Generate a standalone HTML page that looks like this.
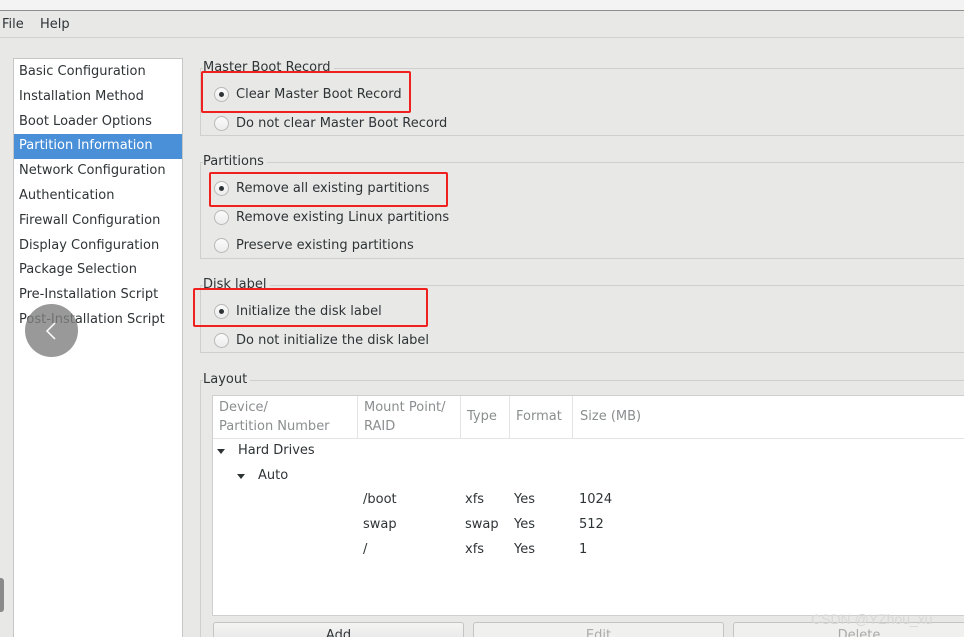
<!DOCTYPE html>
<html style="width:964px;height:637px;overflow:hidden"><head><meta charset="utf-8"><style>
*{margin:0;padding:0;box-sizing:border-box}
body{width:964px;height:637px;overflow:hidden;background:#e8e8e7;font-family:"DejaVu Sans","Liberation Sans",sans-serif;font-size:13px;color:#2e3436;position:relative}
.a{position:absolute;white-space:nowrap}
.frame{position:absolute;border:1px solid #cfcfcd;border-right:none;left:200px;width:764px}
.lbl{position:absolute;background:#e8e8e7;padding-right:3px;color:#2e3436}
.radio{position:absolute;width:15px;height:15px;border:1px solid #b8b8b6;border-radius:50%;background:linear-gradient(#fbfbfb,#ececec)}
.radio.on::after{content:"";position:absolute;left:4px;top:4px;width:5px;height:5px;border-radius:50%;background:#2e3436}
.red{position:absolute;border:2px solid #f0201e;border-radius:2px}
.side div{height:24.8px;line-height:24.8px;padding-left:5px}
.hd{color:#8a8e8f;position:absolute;line-height:19px}
.btn{position:absolute;top:622px;height:15px;border:1px solid #c4c4c2;border-bottom:none;border-radius:3px 3px 0 0;background:linear-gradient(#f4f4f3,#eaeaea);text-align:center;line-height:26px;overflow:hidden}
.tri{position:absolute;width:0;height:0;border-left:4px solid transparent;border-right:4px solid transparent;border-top:5px solid #2e3436}
</style></head><body>
<div class="a" style="left:0;top:0;width:964px;height:11px;background:#f3f3f3;border-bottom:1px solid #8e8e8e"></div>
<div class="a" style="left:0;top:11px;width:964px;height:27px;border-bottom:1px solid #d0d0ce"></div>
<div class="a" style="left:2px;top:17px">File</div>
<div class="a" style="left:40px;top:17px">Help</div>

<div class="a side" style="left:13px;top:58px;width:170px;height:579px;background:#fff;border:1px solid #c6c6c4;border-bottom:none;padding-top:1px">
<div>Basic Configuration</div><div>Installation Method</div><div>Boot Loader Options</div>
<div style="background:#4a90d9;color:#fff">Partition Information</div>
<div>Network Configuration</div><div>Authentication</div><div>Firewall Configuration</div>
<div>Display Configuration</div><div>Package Selection</div><div>Pre-Installation Script</div><div>Post-Installation Script</div>
</div>
<div class="a" style="left:25px;top:304px;width:53px;height:53px;border-radius:50%;background:rgba(128,128,128,.8)"></div>
<svg class="a" style="left:25px;top:304px" width="53" height="53"><path d="M30 19 L22 27 L30 35" stroke="#fff" stroke-width="1.5" fill="none"/></svg>
<div class="a" style="left:0;top:578px;width:4px;height:34px;background:#8a8a8a;border-radius:0 3px 3px 0"></div>

<div class="frame" style="top:68px;height:68px"></div>
<div class="lbl" style="left:203px;top:60px">Master Boot Record</div>
<div class="radio on" style="left:214px;top:87px"></div><div class="a" style="left:236px;top:87px">Clear Master Boot Record</div>
<div class="radio" style="left:214px;top:116px"></div><div class="a" style="left:236px;top:116px">Do not clear Master Boot Record</div>
<div class="red" style="left:201px;top:71px;width:210px;height:42px"></div>

<div class="frame" style="top:162px;height:97px"></div>
<div class="lbl" style="left:203px;top:154px">Partitions</div>
<div class="radio on" style="left:214px;top:181px"></div><div class="a" style="left:236px;top:181px">Remove all existing partitions</div>
<div class="radio" style="left:214px;top:210px"></div><div class="a" style="left:236px;top:210px">Remove existing Linux partitions</div>
<div class="radio" style="left:214px;top:238px"></div><div class="a" style="left:236px;top:238px">Preserve existing partitions</div>
<div class="red" style="left:209px;top:172px;width:239px;height:35px"></div>

<div class="frame" style="top:285px;height:68px"></div>
<div class="lbl" style="left:203px;top:277px">Disk label</div>
<div class="radio on" style="left:214px;top:304px"></div><div class="a" style="left:236px;top:304px">Initialize the disk label</div>
<div class="radio" style="left:214px;top:333px"></div><div class="a" style="left:236px;top:333px">Do not initialize the disk label</div>
<div class="red" style="left:193px;top:288px;width:235px;height:39px"></div>

<div class="frame" style="top:380px;height:257px;border-bottom:none"></div>
<div class="lbl" style="left:203px;top:372px">Layout</div>
<div class="a" style="left:212px;top:395px;width:752px;height:221px;background:#fff;border:1px solid #cfcfcd;border-right:none"></div>
<div class="a" style="left:213px;top:438px;width:751px;height:1px;background:#e4e4e4"></div>
<div class="a" style="left:357px;top:396px;width:1px;height:42px;background:#e4e4e4"></div>
<div class="a" style="left:460px;top:396px;width:1px;height:42px;background:#e4e4e4"></div>
<div class="a" style="left:509px;top:396px;width:1px;height:42px;background:#e4e4e4"></div>
<div class="a" style="left:572px;top:396px;width:1px;height:42px;background:#e4e4e4"></div>
<div class="hd" style="left:219px;top:398px">Device/<br>Partition Number</div>
<div class="hd" style="left:364px;top:398px">Mount Point/<br>RAID</div>
<div class="hd" style="left:467px;top:407px">Type</div>
<div class="hd" style="left:516px;top:407px">Format</div>
<div class="hd" style="left:580px;top:407px">Size (MB)</div>
<div class="tri" style="left:217px;top:449px"></div><div class="a" style="left:238px;top:443px">Hard Drives</div>
<div class="tri" style="left:237px;top:474px"></div><div class="a" style="left:258px;top:468px">Auto</div>
<div class="a" style="left:363px;top:492px">/boot</div><div class="a" style="left:465px;top:492px">xfs</div><div class="a" style="left:514px;top:492px">Yes</div><div class="a" style="left:579px;top:492px">1024</div>
<div class="a" style="left:363px;top:517px">swap</div><div class="a" style="left:465px;top:517px">swap</div><div class="a" style="left:514px;top:517px">Yes</div><div class="a" style="left:579px;top:517px">512</div>
<div class="a" style="left:363px;top:542px">/</div><div class="a" style="left:465px;top:542px">xfs</div><div class="a" style="left:514px;top:542px">Yes</div><div class="a" style="left:579px;top:542px">1</div>
<div class="btn" style="left:213px;width:251px">Add</div>
<div class="btn" style="left:473px;width:251px;color:#aaa;background:#f0f0ef">Edit</div>
<div class="btn" style="left:733px;width:231px;border-right:none;border-radius:3px 0 0 0;color:#aaa;background:#f0f0ef;text-indent:20px">Delete</div>
<div class="a" style="left:811px;top:611px;color:#d8d8d8;font-family:'Liberation Sans',sans-serif;font-size:14px">CSDN @YZhou_xu</div>
</body></html>
